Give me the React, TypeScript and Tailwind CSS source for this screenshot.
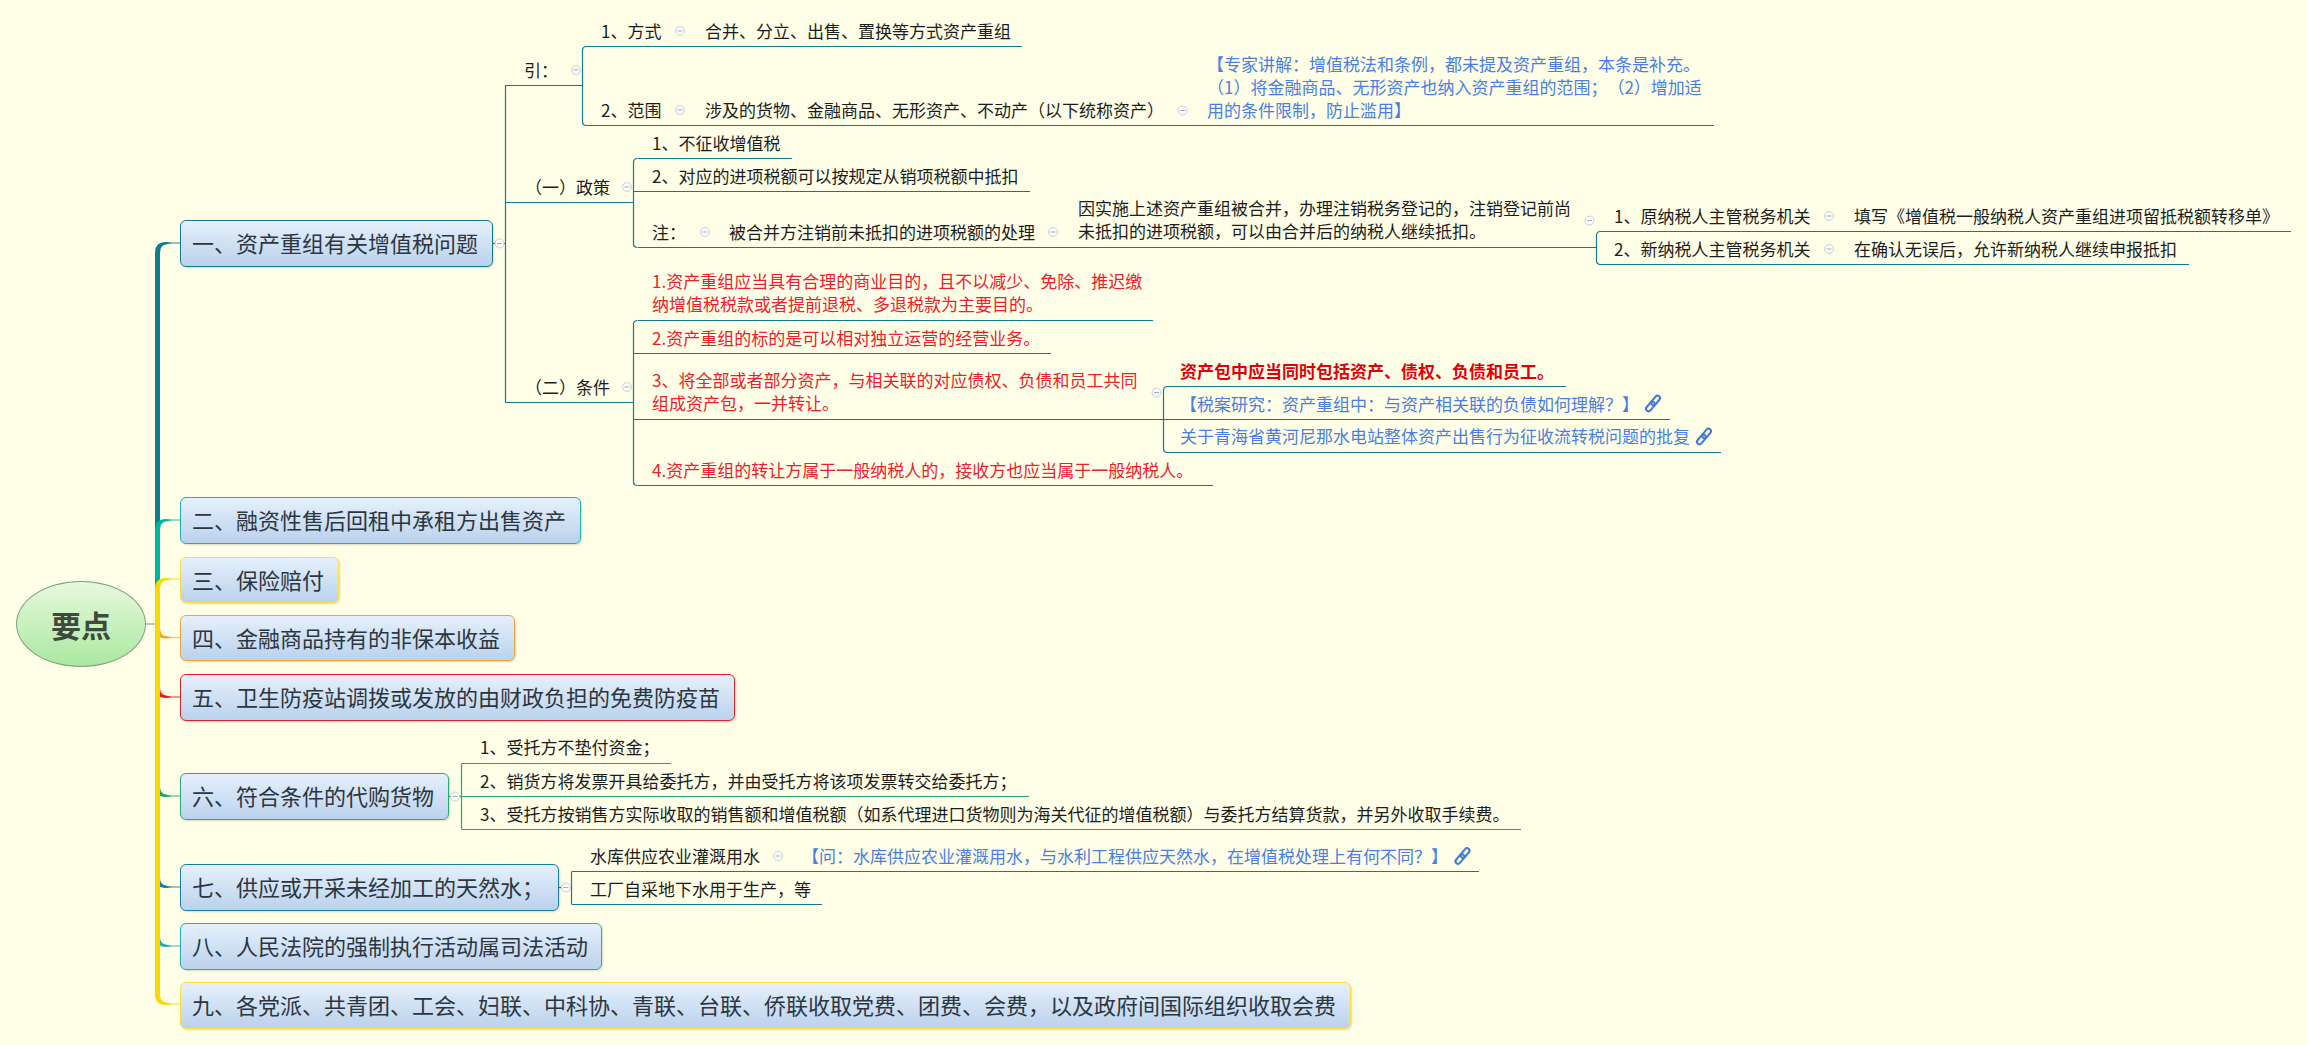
const TEAL = "#12798e";
const GREEN = "#22a673";
const BLUE = "#16799c";

const topics = [
  { text: "一、资产重组有关增值税问题", x: 180, y: 220, w: 313, h: 47, border: "border-[#12798e]" },
  { text: "二、融资性售后回租中承租方出售资产", x: 180, y: 497, w: 401, h: 47, border: "border-[#1fb3ae]" },
  { text: "三、保险赔付", x: 180, y: 557, w: 159, h: 46, border: "border-[#ffdf3a]" },
  { text: "四、金融商品持有的非保本收益", x: 180, y: 615, w: 335, h: 46, border: "border-[#f0a53c]" },
  { text: "五、卫生防疫站调拨或发放的由财政负担的免费防疫苗", x: 180, y: 674, w: 555, h: 47, border: "border-[#e0202a]" },
  { text: "六、符合条件的代购货物", x: 180, y: 773, w: 269, h: 47, border: "border-[#2aa978]" },
  { text: "七、供应或开采未经加工的天然水；", x: 180, y: 864, w: 379, h: 47, border: "border-[#1a7fa4]" },
  { text: "八、人民法院的强制执行活动属司法活动", x: 180, y: 923, w: 422, h: 47, border: "border-[#1fb3ae]" },
  { text: "九、各党派、共青团、工会、妇联、中科协、青联、台联、侨联收取党费、团费、会费，以及政府间国际组织收取会费", x: 180, y: 982, w: 1171, h: 47, border: "border-[#ffdf3a]" },
];

const BLACK = "text-[#1c1c1c]";
const RED = "text-[#e8222c]";
const LINK = "text-[#4a7ee0]";

const labels: { x: number; y: number; lines: string[]; tone: string }[] = [
  { x: 524, y: 70, lines: ["引："], tone: BLACK },
  { x: 525, y: 187, lines: ["（一）政策"], tone: BLACK },
  { x: 525, y: 387, lines: ["（二）条件"], tone: BLACK },
  { x: 601, y: 31, lines: ["1、方式"], tone: BLACK },
  { x: 705, y: 31, lines: ["合并、分立、出售、置换等方式资产重组"], tone: BLACK },
  { x: 601, y: 110, lines: ["2、范围"], tone: BLACK },
  { x: 705, y: 110, lines: ["涉及的货物、金融商品、无形资产、不动产（以下统称资产）"], tone: BLACK },
  {
    x: 1207,
    y: 87,
    lines: [
      "【专家讲解：增值税法和条例，都未提及资产重组，本条是补充。",
      "（1）将金融商品、无形资产也纳入资产重组的范围；（2）增加适",
      "用的条件限制，防止滥用】",
    ],
    tone: LINK,
  },
  { x: 652, y: 143, lines: ["1、不征收增值税"], tone: BLACK },
  { x: 652, y: 176, lines: ["2、对应的进项税额可以按规定从销项税额中抵扣"], tone: BLACK },
  { x: 652, y: 232, lines: ["注："], tone: BLACK },
  { x: 729, y: 232, lines: ["被合并方注销前未抵扣的进项税额的处理"], tone: BLACK },
  {
    x: 1078,
    y: 220.5,
    lines: ["因实施上述资产重组被合并，办理注销税务登记的，注销登记前尚", "未抵扣的进项税额，可以由合并后的纳税人继续抵扣。"],
    tone: BLACK,
  },
  { x: 1614, y: 216, lines: ["1、原纳税人主管税务机关"], tone: BLACK },
  { x: 1854, y: 216, lines: ["填写《增值税一般纳税人资产重组进项留抵税额转移单》"], tone: BLACK },
  { x: 1614, y: 249, lines: ["2、新纳税人主管税务机关"], tone: BLACK },
  { x: 1854, y: 249, lines: ["在确认无误后，允许新纳税人继续申报抵扣"], tone: BLACK },
  {
    x: 652,
    y: 293.5,
    lines: ["1.资产重组应当具有合理的商业目的，且不以减少、免除、推迟缴", "纳增值税税款或者提前退税、多退税款为主要目的。"],
    tone: RED,
  },
  { x: 652, y: 338, lines: ["2.资产重组的标的是可以相对独立运营的经营业务。"], tone: RED },
  {
    x: 652,
    y: 392.5,
    lines: ["3、将全部或者部分资产，与相关联的对应债权、负债和员工共同", "组成资产包，一并转让。"],
    tone: RED,
  },
  { x: 652, y: 470.5, lines: ["4.资产重组的转让方属于一般纳税人的，接收方也应当属于一般纳税人。"], tone: RED },
  { x: 1180, y: 371.5, lines: ["资产包中应当同时包括资产、债权、负债和员工。"], tone: "text-[#e00008] font-bold" },
  { x: 1180, y: 404, lines: ["【税案研究：资产重组中：与资产相关联的负债如何理解？】"], tone: LINK },
  { x: 1180, y: 436.5, lines: ["关于青海省黄河尼那水电站整体资产出售行为征收流转税问题的批复"], tone: LINK },
  { x: 480, y: 747.5, lines: ["1、受托方不垫付资金；"], tone: BLACK },
  { x: 480, y: 781, lines: ["2、销货方将发票开具给委托方，并由受托方将该项发票转交给委托方；"], tone: BLACK },
  {
    x: 480,
    y: 814,
    lines: ["3、受托方按销售方实际收取的销售额和增值税额（如系代理进口货物则为海关代征的增值税额）与委托方结算货款，并另外收取手续费。"],
    tone: BLACK,
  },
  { x: 590, y: 856, lines: ["水库供应农业灌溉用水"], tone: BLACK },
  { x: 802, y: 856, lines: ["【问：水库供应农业灌溉用水，与水利工程供应天然水，在增值税处理上有何不同？】"], tone: LINK },
  { x: 590, y: 889, lines: ["工厂自采地下水用于生产，等"], tone: BLACK },
];

// horizontal rules under the labels: [x1, x2, y, colour]
const rules: [number, number, number, string][] = [
  [492, 505, 243.5, TEAL],
  [505, 582, 85.5, TEAL],
  [505, 633, 202.5, TEAL],
  [505, 633, 402.5, TEAL],
  [586, 1022, 46.5, TEAL],
  [586, 1714, 125.5, TEAL],
  [638, 792, 158.5, TEAL],
  [634, 1030, 191.5, TEAL],
  [638, 1596, 247.5, TEAL],
  [1600, 2291, 231.5, TEAL],
  [1600, 2189, 264.5, TEAL],
  [638, 1153, 320.5, TEAL],
  [634, 1051, 353.5, TEAL],
  [634, 1163, 419.5, TEAL],
  [638, 1213, 485.5, TEAL],
  [1167, 1566, 386.5, TEAL],
  [1163, 1670, 419.5, TEAL],
  [1167, 1721, 452.5, TEAL],
  [449, 462, 796.5, GREEN],
  [462, 671, 763.5, GREEN],
  [462, 1029, 796.5, GREEN],
  [462, 1521, 829.5, GREEN],
  [559, 572, 887.5, BLUE],
  [572, 1479, 871.5, BLUE],
  [572, 822, 904.5, BLUE],
];

// vertical brackets that join the rules: [x, top, bottom, radius, colour]
const brackets: [number, number, number, number, string][] = [
  [505.5, 85.5, 402.5, 0, TEAL],
  [582.5, 46.5, 125.5, 4, TEAL],
  [633.5, 158.5, 247.5, 4, TEAL],
  [633.5, 320.5, 485.5, 4, TEAL],
  [1163.5, 386.5, 452.5, 4, TEAL],
  [1596.5, 231.5, 264.5, 4, TEAL],
  [461.5, 763.5, 829.5, 0, GREEN],
  [571.5, 871.5, 904.5, 0, BLUE],
];

const collapsers: [number, number][] = [
  [499.5, 243.5], [576, 70], [627, 187], [627, 387], [680, 31], [680, 110], [1182.5, 110.5],
  [705, 232], [1053, 232], [1589.5, 220.5], [1829, 216], [1829, 249], [1156.5, 392.5],
  [455, 796.5], [566, 887.5], [778, 856],
];

const chains: [number, number][] = [
  [1653, 403.5],
  [1704, 436.5],
  [1462.5, 856],
];

// tapered branches from the centre to each topic, later ones paint on top
const branches: { y: number; color: string }[] = [
  { y: 946, color: "#1fb3ae" },
  { y: 887, color: "#1a7fa4" },
  { y: 796, color: "#18a860" },
  { y: 697, color: "#e81c1c" },
  { y: 637.5, color: "#f5a623" },
  { y: 1004, color: "#f7d900" },
  { y: 243, color: "#0f7c90" },
  { y: 520, color: "#00b39c" },
  { y: 579, color: "#f7d900" },
];

function branchPath(y: number) {
  if (y < 624) {
    return `M155 624 L155 ${y + 10} Q155 ${y - 1} 166 ${y - 1} L172 ${y} L166 ${y + 1.5} Q160 ${y + 2} 160 ${y + 10} L160 624 Z`;
  }
  return `M155 624 L155 ${y - 10} Q155 ${y + 1} 166 ${y + 1} L172 ${y} L166 ${y - 1.5} Q160 ${y - 2} 160 ${y - 10} L160 624 Z`;
}

function bracketPath(x: number, top: number, bottom: number, r: number) {
  return `M${x + r} ${top} Q${x} ${top} ${x} ${top + r} L${x} ${bottom - r} Q${x} ${bottom} ${x + r} ${bottom}`;
}

function Connectors() {
  return (
    <svg className="absolute inset-0" width={2307} height={1045}>
      <line x1={146} y1={624} x2={158} y2={624} stroke="#8c8c80" strokeWidth={1} />
      {branches.map((b) => (
        <g key={b.y}>
          <line x1={164} y1={b.y} x2={180} y2={b.y} stroke={b.color} strokeWidth={1.5} strokeOpacity={0.6} />
          <path d={branchPath(b.y)} fill={b.color} />
        </g>
      ))}
      {brackets.map(([x, top, bottom, r, color]) => (
        <path key={`${x}-${top}`} d={bracketPath(x, top, bottom, r)} fill="none" stroke={color} strokeWidth={1.2} />
      ))}
      {rules.map(([x1, x2, y, color]) => (
        <line key={`${x1}-${y}`} x1={x1} y1={y} x2={x2} y2={y} stroke={color} strokeWidth={1.2} />
      ))}
      {collapsers.map(([x, y]) => (
        <g key={`${x}-${y}`}>
          <circle cx={x} cy={y} r={4.5} fill="#fbfcf2" stroke="#c6d0e2" strokeWidth={1} />
          <line x1={x - 2.5} y1={y} x2={x + 2.5} y2={y} stroke="#a3aec6" strokeWidth={1} />
        </g>
      ))}
      {chains.map(([x, y]) => (
        <g key={`${x}-${y}`} transform={`translate(${x} ${y}) rotate(-50)`} fill="none" stroke="#3f78d6" strokeWidth={2}>
          <rect x={-9.5} y={-2.5} width={11} height={5} rx={2.5} />
          <rect x={-1.5} y={-2.5} width={11} height={5} rx={2.5} />
        </g>
      ))}
    </svg>
  );
}

export default function App() {
  return (
    <div className="relative w-[2307px] h-[1045px] overflow-hidden bg-[#ffffe8] font-['Noto_Sans_CJK_SC',sans-serif] [text-spacing-trim:space-all]">
      <Connectors />

      <div className="absolute left-[16px] top-[581px] w-[130px] h-[86px] rounded-[50%] border border-[#84a07e] bg-linear-to-b from-[#e6f9dc] to-[#a9e8a0] flex items-center justify-center text-[30px] font-bold text-[#3f4a3c]">
        要点
      </div>

      {topics.map((t) => (
        <div
          key={t.text}
          className={`absolute flex items-center pl-[11px] pb-[2px] rounded-[6px] border-[1.5px] bg-linear-to-b from-[#e6f0fc] to-[#bad2ec] shadow-[1px_1px_2px_rgba(0,0,0,0.15)] text-[22px] text-[#2c3640] whitespace-nowrap ${t.border}`}
          style={{ left: t.x, top: t.y, width: t.w, height: t.h }}
        >
          {t.text}
        </div>
      ))}

      {labels.map((l) => (
        <div
          key={l.lines[0]}
          className={`absolute -translate-y-1/2 mt-[-1.5px] text-[17px] leading-[23px] whitespace-nowrap ${l.tone}`}
          style={{ left: l.x, top: l.y }}
        >
          {l.lines.map((line) => (
            <div key={line}>{line}</div>
          ))}
        </div>
      ))}
    </div>
  );
}
